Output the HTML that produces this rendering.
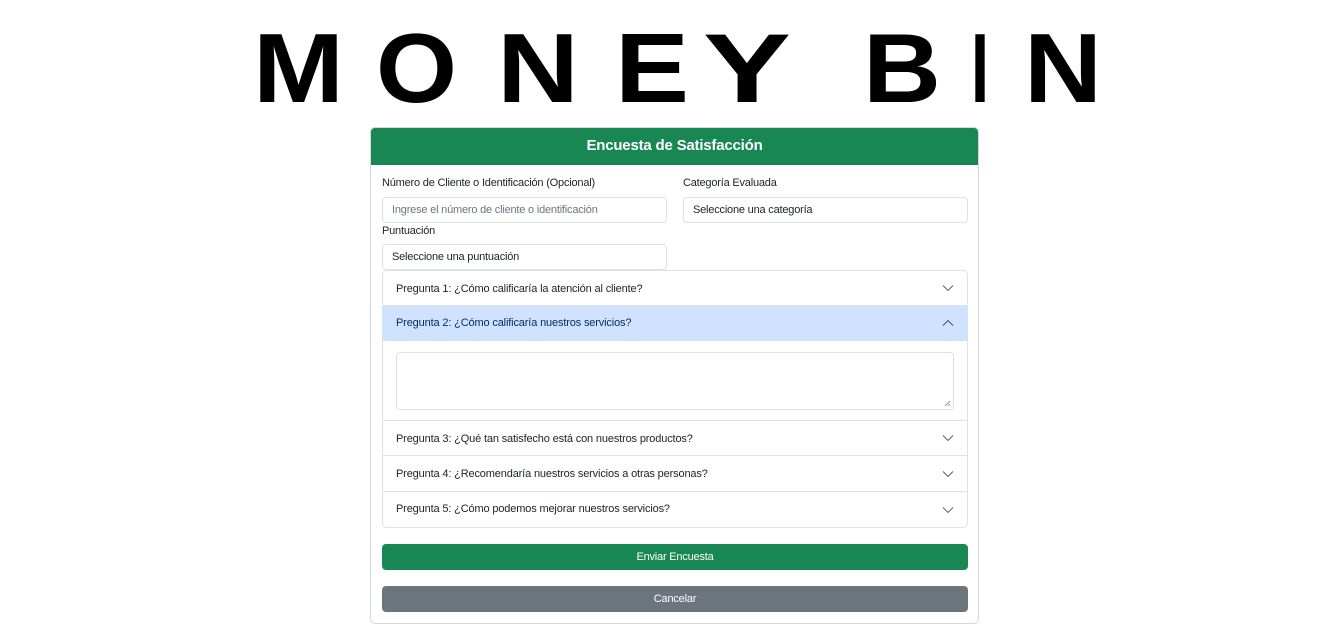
<!DOCTYPE html>
<html><head><meta charset="utf-8"><style>
*{box-sizing:border-box;margin:0;padding:0}
body{width:1336px;height:639px;background:#fff;position:relative;font-family:"Liberation Sans",sans-serif;color:#212529;overflow:hidden}
.a{position:absolute}
.t{font-size:11px;letter-spacing:-0.2px;white-space:nowrap}
.inp{position:absolute;border:1px solid #dee2e6;border-radius:4px;background:#fff;height:26px;padding-left:9px;line-height:24px}
.q{position:absolute;left:382px;width:586px;border-bottom:1px solid #dee2e6;padding-left:14px;font-size:11px;letter-spacing:-0.15px;color:#212529}
.chev{position:absolute;right:14px;top:50%;width:12px;height:8px;margin-top:-4px}
</style></head><body>
<svg class="a" style="left:0;top:0" width="1336" height="120">
<g font-family="Liberation Sans,sans-serif" font-weight="bold" font-size="98" fill="#000">
<text x="253" y="102" textLength="91" lengthAdjust="spacingAndGlyphs">M</text>
<text x="376" y="102" textLength="81" lengthAdjust="spacingAndGlyphs">O</text>
<text x="497" y="102" textLength="82" lengthAdjust="spacingAndGlyphs">N</text>
<text x="615" y="102" textLength="74" lengthAdjust="spacingAndGlyphs">E</text>
<text x="703" y="102" textLength="88" lengthAdjust="spacingAndGlyphs">Y</text>
<text x="863" y="102" textLength="78" lengthAdjust="spacingAndGlyphs">B</text>
<text x="971" y="102" textLength="18" lengthAdjust="spacingAndGlyphs">I</text>
<text x="1024" y="102" textLength="78" lengthAdjust="spacingAndGlyphs">N</text>
</g></svg>
<div class="a" style="left:370px;top:127px;width:609px;height:497px;border:1px solid #d5d8db;border-radius:5px;overflow:hidden">
<div style="background:#198754;height:37px;color:#fff;font-weight:bold;font-size:15px;text-align:center;line-height:36px;letter-spacing:-0.2px">Encuesta de Satisfacción</div>
</div>
<div class="a t" style="left:382px;top:177px">Número de Cliente o Identificación (Opcional)</div>
<div class="a t" style="left:683px;top:177px">Categoría Evaluada</div>
<div class="inp t" style="left:382px;top:197px;width:285px;color:#6c757d">Ingrese el número de cliente o identificación</div>
<div class="inp t" style="left:683px;top:197px;width:285px">Seleccione una categoría</div>
<div class="a t" style="left:382px;top:225px">Puntuación</div>
<div class="inp t" style="left:382px;top:244px;width:285px">Seleccione una puntuación</div>
<div class="a" style="left:382px;top:270px;width:586px;height:258px;border:1px solid #dee2e6;border-radius:5px"></div>
<div class="q" style="top:270px;height:36px;line-height:36px;border-top:1px solid #dee2e6;border-radius:5px 5px 0 0">Pregunta 1: ¿Cómo calificaría la atención al cliente?<svg class="chev" viewBox="0 0 12 8"><path d="M1 1.5l5 5 5-5" fill="none" stroke="#555" stroke-width="0.9"/></svg></div>
<div class="q" style="top:306px;height:35px;line-height:34px;background:#cfe2ff;color:#052c65;border-bottom:1px solid #cfe2ff">Pregunta 2: ¿Cómo calificaría nuestros servicios?<svg class="chev" viewBox="0 0 12 8"><path d="M1 6.5l5-5 5 5" fill="none" stroke="#2a4a7a" stroke-width="0.9"/></svg></div>
<div class="a" style="left:396px;top:352px;width:558px;height:58px;border:1px solid #dee2e6;border-radius:4px"><svg class="a" style="right:2px;bottom:2px" width="7" height="7"><path d="M1 6L6 1M4 6L6 4" stroke="#777" stroke-width="0.8"/></svg></div>
<div class="q" style="top:420px;height:36px;line-height:36px;border-top:1px solid #dee2e6">Pregunta 3: ¿Qué tan satisfecho está con nuestros productos?<svg class="chev" viewBox="0 0 12 8"><path d="M1 1.5l5 5 5-5" fill="none" stroke="#555" stroke-width="0.9"/></svg></div>
<div class="q" style="top:456px;height:36px;line-height:36px">Pregunta 4: ¿Recomendaría nuestros servicios a otras personas?<svg class="chev" viewBox="0 0 12 8"><path d="M1 1.5l5 5 5-5" fill="none" stroke="#555" stroke-width="0.9"/></svg></div>
<div class="q" style="top:492px;height:36px;line-height:35px;border-bottom:none">Pregunta 5: ¿Cómo podemos mejorar nuestros servicios?<svg class="chev" viewBox="0 0 12 8"><path d="M1 1.5l5 5 5-5" fill="none" stroke="#555" stroke-width="0.9"/></svg></div>
<div class="a t" style="left:382px;top:544px;width:586px;height:26px;background:#198754;border-radius:4px;color:#fff;text-align:center;line-height:26px">Enviar Encuesta</div>
<div class="a t" style="left:382px;top:586px;width:586px;height:26px;background:#6c757d;border-radius:4px;color:#fff;text-align:center;line-height:26px">Cancelar</div>
</body></html>
